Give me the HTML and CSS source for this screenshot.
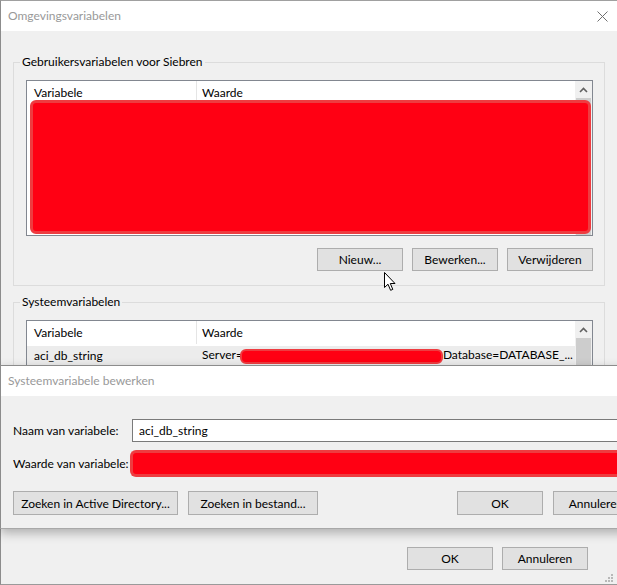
FILE: index.html
```html
<!DOCTYPE html>
<html lang="nl">
<head>
    <meta charset="UTF-8">
    <meta name="viewport" content="width=device-width, initial-scale=1.0">
    <title>Omgevingsvariabelen</title>
    <link rel="stylesheet" href="styles.css">
</head>
<body>
    <div class="window">
        <div class="titlebar">
            <span class="title">Omgevingsvariabelen</span>
            <svg class="close" width="11" height="11" viewBox="0 0 11 11">
                <path d="M0.5 0.5 L10.5 10.5 M10.5 0.5 L0.5 10.5" stroke="#707070" stroke-width="1" fill="none"/>
            </svg>
        </div>

        <div class="window-body">
            <fieldset class="group">
                <legend>Gebruikersvariabelen voor Siebren</legend>
                <div class="list list-user">
                    <div class="list-main">
                        <div class="list-header">
                            <span class="col-name">Variabele</span>
                            <span class="col-value">Waarde</span>
                        </div>
                    </div>
                    <div class="scrollbar">
                        <div class="scroll-up">
                            <svg width="9" height="6" viewBox="0 0 9 6"><path d="M1 5 L4.5 1.5 L8 5" stroke="#606060" stroke-width="1.6" fill="none"/></svg>
                        </div>
                        <div class="scroll-thumb"></div>
                    </div>
                    <!-- afgeschermde gegevens -->
                    <div class="redacted redacted-list"></div>
                </div>
                <div class="button-row">
                    <button class="btn">Nieuw...</button>
                    <button class="btn">Bewerken...</button>
                    <button class="btn">Verwijderen</button>
                </div>
            </fieldset>

            <fieldset class="group group-system">
                <legend>Systeemvariabelen</legend>
                <div class="list list-system">
                    <div class="list-main">
                        <div class="list-header">
                            <span class="col-name">Variabele</span>
                            <span class="col-value">Waarde</span>
                        </div>
                        <div class="list-row">
                            <span class="col-name">aci_db_string</span>
                            <span class="col-value">Server=<span class="redacted redacted-inline"></span>Database=DATABASE_...</span>
                        </div>
                    </div>
                    <div class="scrollbar">
                        <div class="scroll-up">
                            <svg width="9" height="6" viewBox="0 0 9 6"><path d="M1 5 L4.5 1.5 L8 5" stroke="#606060" stroke-width="1.6" fill="none"/></svg>
                        </div>
                        <div class="scroll-thumb"></div>
                    </div>
                </div>
            </fieldset>

            <div class="footer">
                <button class="btn">OK</button>
                <button class="btn">Annuleren</button>
            </div>
        </div>

        <svg class="cursor" width="13" height="20" viewBox="0 0 13 20">
            <path d="M0.5 0.5 L0.5 15.5 L4 12.2 L6.6 18.3 L8.8 17.4 L6.3 11.5 L11 11.5 Z" fill="#fff" stroke="#000" stroke-width="1" stroke-linejoin="miter"/>
        </svg>

        <svg class="grip" width="9" height="9" viewBox="0 0 9 9">
            <rect x="6" y="0" width="2" height="2" fill="#b8b8b8"/>
            <rect x="3" y="3" width="2" height="2" fill="#b8b8b8"/>
            <rect x="6" y="3" width="2" height="2" fill="#b8b8b8"/>
            <rect x="0" y="6" width="2" height="2" fill="#b8b8b8"/>
            <rect x="3" y="6" width="2" height="2" fill="#b8b8b8"/>
            <rect x="6" y="6" width="2" height="2" fill="#b8b8b8"/>
        </svg>

        <div class="dialog">
            <div class="titlebar dialog-titlebar">
                <span class="title">Systeemvariabele bewerken</span>
            </div>
            <div class="dialog-body">
                <div class="form-grid">
                    <label for="var-name">Naam van variabele:</label>
                    <input type="text" id="var-name" value="aci_db_string">
                    <label>Waarde van variabele:</label>
                    <div class="redacted redacted-input"></div>
                </div>
                <div class="dialog-buttons">
                    <button class="btn btn-ad">Zoeken in Active Directory...</button>
                    <button class="btn btn-file">Zoeken in bestand...</button>
                    <button class="btn btn-ok">OK</button>
                    <button class="btn">Annuleren</button>
                </div>
            </div>
        </div>
    </div>
</body>
</html>
```

FILE: styles.css
```css
:root {
    --window-bg: #f0f0f0;
    --group-border: #dcdcdc;
    --list-border: #828790;
    --button-bg: #e1e1e1;
    --button-border: #adadad;
    --title-color: #999;
    --redact-fill: #ff0013;
    --redact-edge: #ee3c40;
}

* {
    box-sizing: border-box;
}

body {
    margin: 0;
    width: 617px;
    height: 585px;
    overflow: hidden;
    background-color: #e8e8e8;
    font-family: Lato, "Noto Sans", sans-serif;
    font-size: 12px;
    color: #000;
}

.window {
    position: relative;
    width: 618px;
    height: 585px;
    background-color: var(--window-bg);
    border-left: 1px solid #8c8c8c;
    border-top: 1px solid #a0a0a0;
    border-bottom: 1px solid #9a9a9a;
    display: flex;
    flex-direction: column;
}

.titlebar {
    height: 30px;
    flex: none;
    background-color: white;
    display: flex;
    align-items: center;
    justify-content: space-between;
    padding: 0 10px 0 7px;
}

.title {
    color: var(--title-color);
    line-height: 16px;
}

.window-body {
    flex: 1;
    display: flex;
    flex-direction: column;
    padding: 0 13px 14px 12px;
}

.group {
    margin: 23px 0 0;
    padding: 10px 11px 14px 12px;
    border: 1px solid var(--group-border);
    min-width: 0;
}

.group legend {
    margin-left: -6px;
    padding: 0 2px;
    line-height: 16px;
}

.group-system {
    margin-top: 8px;
}

.list {
    position: relative;
    display: flex;
    border: 1px solid var(--list-border);
    background-color: white;
}

.list-user {
    height: 156px;
}

.list-system {
    height: 175px;
}

.list-main {
    flex: 1;
    min-width: 0;
    overflow: hidden;
}

.list-header,
.list-row {
    display: flex;
    align-items: center;
}

.list-header {
    height: 23px;
}

.list-header .col-name {
    align-self: stretch;
    display: flex;
    align-items: center;
    border-right: 1px solid #e5e5e5;
}

.list-row {
    height: 19px;
    margin-top: 2px;
    background-color: #ececec;
}

.col-name {
    width: 170px;
    flex: none;
    padding-left: 7px;
}

.col-value {
    padding-left: 5px;
    white-space: nowrap;
}

.scrollbar {
    width: 17px;
    flex: none;
    background-color: var(--window-bg);
    display: flex;
    flex-direction: column;
}

.scroll-up {
    height: 17px;
    display: flex;
    align-items: center;
    justify-content: center;
}

.scroll-thumb {
    flex: 1;
    margin: 0 1px;
    background-color: #cdcdcd;
}

.redacted {
    background-color: var(--redact-fill);
    border: 2px solid var(--redact-edge);
}

.redacted-list {
    position: absolute;
    left: 3px;
    top: 19px;
    width: 561px;
    height: 134px;
    border-width: 3px;
    border-radius: 6px;
}

.redacted-inline {
    display: inline-block;
    width: 203px;
    height: 15px;
    margin-left: -3px;
    vertical-align: middle;
    border-radius: 6px;
}

.button-row {
    display: flex;
    justify-content: flex-end;
    gap: 9px;
    margin-top: 12px;
}

.btn {
    width: 86px;
    height: 23px;
    padding: 0;
    font-family: inherit;
    font-size: inherit;
    color: #000;
    background-color: var(--button-bg);
    border: 1px solid var(--button-border);
    border-radius: 0;
}

.footer {
    margin-top: auto;
    display: flex;
    justify-content: flex-end;
    gap: 9px;
    padding-right: 17px;
}

.cursor {
    position: absolute;
    left: 383px;
    top: 271px;
}

.grip {
    position: absolute;
    right: 4px;
    bottom: 1px;
}

.dialog {
    position: absolute;
    left: -1px;
    top: 364px;
    width: 652px;
    height: 164px;
    background-color: var(--window-bg);
    border: 1px solid #8c8c8c;
    border-bottom-color: #a8a8a8;
    box-shadow: 0 4px 10px rgba(0, 0, 0, 0.28);
    display: flex;
    flex-direction: column;
}

.dialog-body {
    padding: 23px 12px 13px 12px;
}

.form-grid {
    display: grid;
    grid-template-columns: 119px 1fr;
    row-gap: 8px;
    align-items: center;
}

.form-grid label {
    white-space: nowrap;
}

.form-grid input {
    height: 23px;
    border: 1px solid #7a7a7a;
    padding: 0 6px;
    font-family: inherit;
    font-size: inherit;
    outline: none;
}

.redacted-input {
    height: 27px;
    margin-left: -2px;
    border-width: 3px;
    border-radius: 6px 0 0 6px;
    border-right: none;
}

.dialog-buttons {
    display: flex;
    margin-top: 14px;
    gap: 10px;
}

.dialog-buttons .btn {
    height: 24px;
}

.dialog-buttons .btn-ad {
    width: 165px;
}

.dialog-buttons .btn-file {
    width: 130px;
}

.dialog-buttons .btn-ok {
    margin-left: auto;
}
```
